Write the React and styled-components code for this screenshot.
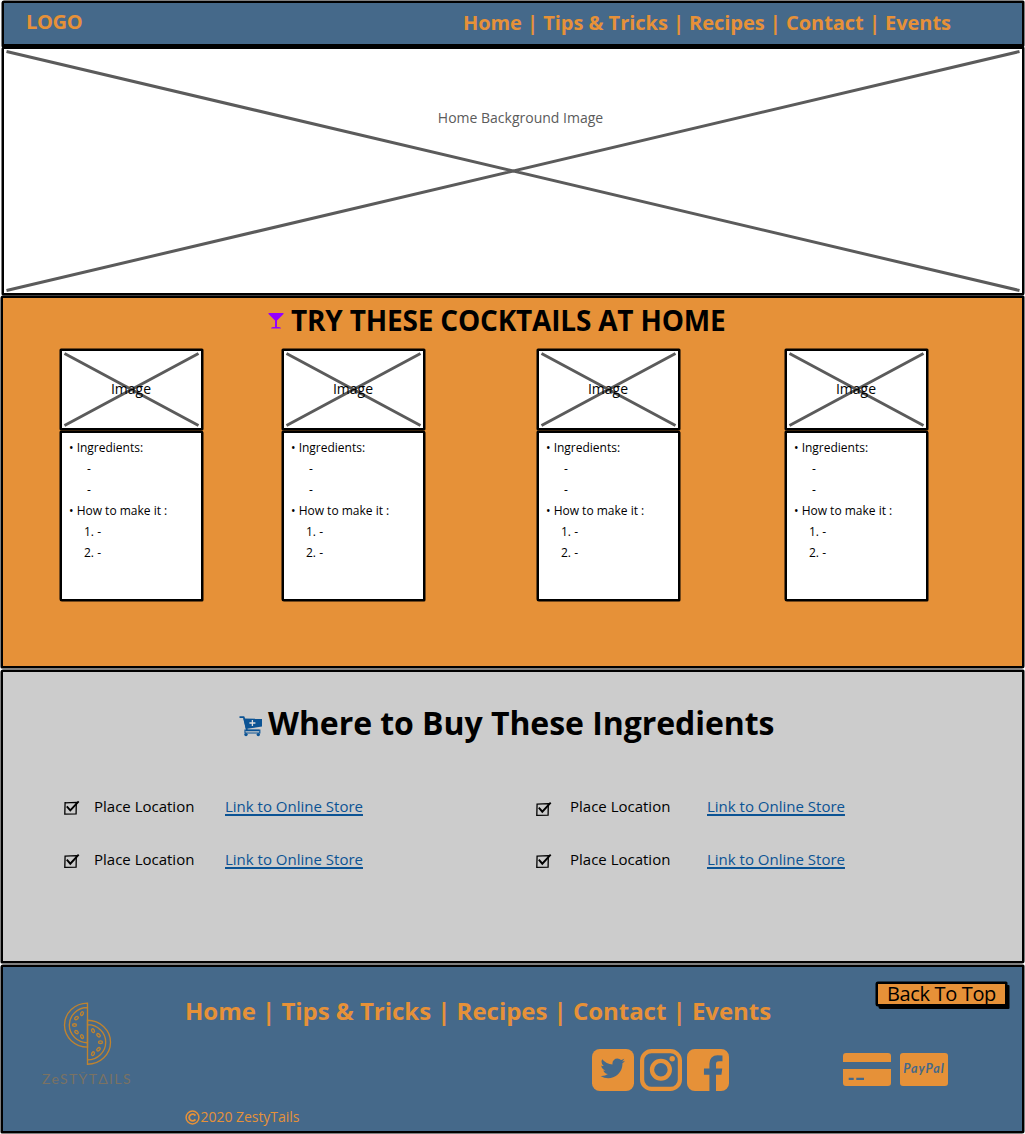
import React from "react";
import styled, { createGlobalStyle } from "styled-components";

const ORANGE = "#e69138";
const BLUE = "#45698a";
const LINK = "#0b5394";

const GlobalStyle = createGlobalStyle`
  * { box-sizing: border-box; }
  body { margin: 0; background: #fff; color: #000; font-family: "Open Sans", "Noto Sans", sans-serif; }
  h1, h2, p, ul, ol { margin: 0; padding: 0; }
  ul, ol { list-style: none; }
  svg { display: block; flex: none; }
`;

const Page = styled.div`
  width: 1025px;
  height: 1134px;
  padding: 1px 1px 0;
  display: flex;
  flex-direction: column;
  overflow: hidden;
`;

const Panel = styled.section`
  border: 2px solid #000;
  border-radius: 2px 1px 2px 1px;
  box-shadow: 0 0 0 0.5px #000;
  flex: none;
`;

const Header = styled(Panel).attrs({ as: "header" })`
  height: 46px;
  margin-left: 1px;
  border-bottom-width: 3px;
  background: ${BLUE};
  display: flex;
  justify-content: space-between;
  padding: 0 71px 0 22px;
`;

const Brand = styled.div`
  font-size: 20px;
  font-weight: 700;
  line-height: 37px;
  letter-spacing: -0.3px;
  color: ${ORANGE};
`;

const Nav = styled.nav`
  display: flex;
  white-space: pre;
  font-weight: 700;
  color: ${ORANGE};
  font-size: ${(p) => p.$size}px;
  line-height: ${(p) => p.$line}px;
  letter-spacing: -0.035px;
`;

const Hero = styled(Panel)`
  height: 248px;
  margin-left: 1px;
  background: #fff;
  display: grid;
  > * { grid-area: 1 / 1; }
`;

const HeroLabel = styled.p`
  justify-self: center;
  margin: 58px 0 0 15px;
  font-size: 14px;
  line-height: 22px;
  color: #5b5b5b;
`;

const Cocktails = styled(Panel)`
  height: 372px;
  margin-top: 1px;
  background: ${ORANGE};
`;

const Heading = styled.h1`
  display: flex;
  font-weight: 700;
  white-space: nowrap;
  font-size: ${(p) => p.$size}px;
  line-height: 40px;
  letter-spacing: ${(p) => p.$track}px;
  padding: ${(p) => p.$pad};
  gap: ${(p) => p.$gap}px;
`;

const IconSlot = styled.span`
  padding-top: ${(p) => p.$top}px;
`;

const CardGrid = styled.div`
  display: grid;
  grid-template-columns: 222px 255px 248px 144px;
  margin: 9px 0 0 57px;
`;

const Card = styled.article`
  width: 143px;
`;

const Thumb = styled.div`
  height: 81px;
  border: 2px solid #000;
  border-radius: 1px;
  box-shadow: 0 0 0 0.5px #000;
  background: #fff;
  display: grid;
  > * { grid-area: 1 / 1; }
`;

const ThumbLabel = styled.span`
  justify-self: center;
  margin: 28px 1px 0 0;
  font-size: 14px;
  line-height: 20px;
`;

const Recipe = styled.ul`
  height: 170px;
  margin-top: 1px;
  border: 2px solid #000;
  border-radius: 1px 2px 1px 2px;
  box-shadow: 0 0 0 0.5px #000;
  background: #fff;
  padding: 4px 0 0 7px;
  font-size: 12px;
  line-height: 21px;
`;

const Line = styled.li`
  white-space: pre;
  padding-left: ${(p) => p.$indent || 0}px;
`;

const Stores = styled(Panel)`
  height: 293px;
  margin-top: 2px;
  background: #ccc;
`;

const StoreGrid = styled.div`
  display: grid;
  grid-template-columns: 472px 400px;
  grid-auto-rows: 53px;
  margin: 51px 0 0 61px;
`;

const Store = styled.div`
  display: flex;
  font-size: 15px;
  line-height: 24px;
`;

const StoreName = styled.span`
  width: ${(p) => p.$width}px;
  margin-left: ${(p) => p.$left}px;
`;

const StoreLink = styled.a`
  color: ${LINK};
  text-decoration: underline;
  text-decoration-thickness: 1.5px;
  text-underline-offset: 2px;
`;

const Footer = styled(Panel).attrs({ as: "footer" })`
  height: 168px;
  margin-top: 2px;
  background: ${BLUE};
  display: grid;
  grid-template-columns: 182px 655px 1fr;
`;

const LogoBlock = styled.div`
  padding: 35px 0 0 39px;
  display: flex;
  flex-direction: column;
`;

const Wordmark = styled.span`
  margin-top: 4px;
  font-family: Lato, sans-serif;
  font-weight: 400;
  font-size: 14px;
  line-height: 18px;
  letter-spacing: 1.35px;
  color: #7a7263;
  white-space: nowrap;
`;

const FooterMain = styled.div`
  display: flex;
  flex-direction: column;
  padding-top: 26px;
`;

const Social = styled.div`
  display: flex;
  gap: 5.5px;
  margin: 20px 0 0 407px;
`;

const Copyright = styled.p`
  display: flex;
  align-items: center;
  gap: 0.5px;
  margin-top: 15px;
  font-size: 14px;
  line-height: 22px;
  letter-spacing: -0.04px;
  color: ${ORANGE};
`;

const FooterSide = styled.div`
  padding-top: 15px;
`;

const TopButton = styled.button`
  display: block;
  width: 131px;
  height: 24px;
  margin-left: 36px;
  padding: 0;
  border: 2px solid #000;
  border-radius: 2px 1px 1px 2px;
  background: ${ORANGE};
  box-shadow: 0 0 0 0.5px #000, 2.5px 3px #000;
  color: #000;
  font: 20px/20px "Open Sans", "Noto Sans", sans-serif;
  letter-spacing: -0.35px;
  white-space: nowrap;
`;

const Payments = styled.div`
  display: flex;
  gap: 9px;
  margin: 47px 0 0 3px;
`;

const PayPal = styled.span`
  width: 48px;
  height: 33px;
  border-radius: 3px;
  background: ${ORANGE};
  color: ${BLUE};
  font: italic 700 12.5px/31px Lato, sans-serif;
  letter-spacing: 1px;
  text-align: center;
`;

function Cross({ width, height }) {
  return (
    <svg width={width} height={height} stroke="#5b5b5b" strokeWidth="3">
      <path d={`M2.5 2.5L${width - 2.5} ${height - 2.5}M2.5 ${height - 2.5}L${width - 2.5} 2.5`} />
    </svg>
  );
}

function MartiniIcon() {
  return (
    <svg width="16" height="17" viewBox="0 0 16 17" fill="#9500ff">
      <path d="M.5 1H15.5V2L9 8.5V15H11Q13 15.2 13 16.5H3Q3 15.2 5 15H7V8.5L.5 2Z" />
    </svg>
  );
}

function CartIcon() {
  return (
    <svg width="24" height="21" viewBox="0 0 24 21">
      <path d="M.5 1.2H4.8L8 14.2M7 14.5H20" fill="none" stroke={LINK} strokeWidth="1.7" strokeLinejoin="round" />
      <path d="M4.5 2.5L23 2.8V10.5L8 12.8H6.8Z" fill={LINK} />
      <path d="M6 14.2H20.8V17H6Z" fill="none" stroke={LINK} strokeWidth="1.2" />
      <circle cx="7" cy="18.6" r="1.7" fill={LINK} />
      <circle cx="19.3" cy="18.6" r="1.7" fill={LINK} />
      <path d="M13.4 4V10M10.4 7H16.4" stroke="#ddd" strokeWidth="1.3" />
    </svg>
  );
}

function CheckIcon({ shift }) {
  return (
    <svg width="17" height="24" viewBox="0 0 17 24" fill="none" stroke="#000">
      <g transform={`translate(0 ${shift})`}>
        <path d="M1 6.1L12.3 5.7L12.1 17.1L.8 17.4L1.1 5.4" strokeWidth="1.3" />
        <path d="M2.8 9.6L6.3 13.7L14.7 4.6" strokeWidth="1.9" />
      </g>
    </svg>
  );
}

const SEEDS = [
  [-5.5, -11.5, 25],
  [-11, -7, 50],
  [-13, 0, 90],
  [-11, 7, 130],
  [-5.5, 11.5, 155],
];

function MelonHalf({ x, y, turn }) {
  return (
    <g transform={`translate(${x} ${y}) rotate(${turn})`}>
      <path d="M0 -22A23 22 0 0 0 0 22ZM0 -17.6A18.2 17.6 0 0 0 0 17.6" />
      {SEEDS.map(([sx, sy, a]) => (
        <ellipse key={sy} cx={sx} cy={sy} rx="1.3" ry="2" transform={`rotate(${a} ${sx} ${sy})`} />
      ))}
    </g>
  );
}

function MelonLogo() {
  return (
    <svg width="90" height="64" fill="none" stroke="#bf832f" strokeWidth="1.35">
      <MelonHalf x={45.5} y={23.1} turn={0} />
      <MelonHalf x={45.5} y={40.2} turn={180} />
    </svg>
  );
}

function TwitterIcon() {
  return (
    <svg width="42" height="42" viewBox="0 0 1536 1536">
      <rect width="1536" height="1536" rx="288" fill={ORANGE} />
      <path
        transform="translate(758 790) scale(.87) translate(-768 -768)"
        fill={BLUE}
        d="M1280 354q-56 25-121 34 68-40 93-117-65 38-134 51-61-66-153-66-87 0-148.500 61.500t-61.500 148.500q0 29 5 48-129-7-242-65t-192-155q-29 50-29 106 0 114 91 175-47-1-100-26v2q0 75 50 133.500t123 72.500q-29 8-51 8-13 0-39-4 21 63 74.500 104t121.500 42q-116 90-261 90-26 0-50-3 148 94 322 94 112 0 210-35.500t168-95 120.500-137 75-162 24.500-168.500q0-18-1-27 63-45 105-109z"
      />
    </svg>
  );
}

function InstagramIcon() {
  return (
    <svg width="42" height="42" fill="none" stroke={ORANGE}>
      <rect x="2.1" y="2.1" width="37.8" height="37.8" rx="9.5" strokeWidth="4.2" />
      <circle cx="20.9" cy="20.7" r="8.9" strokeWidth="4.3" />
      <circle cx="32.2" cy="9.8" r="2.7" fill={ORANGE} stroke="none" />
    </svg>
  );
}

function FacebookIcon() {
  return (
    <svg width="42" height="42" viewBox="0 128 1536 1536" fill={ORANGE}>
      <path d="M1248 128q119 0 203.5 84.5t84.5 203.5v960q0 119-84.5 203.5t-203.5 84.5h-188v-595h199l30-232h-229v-148q0-56 23.5-84t91.5-28l122-1v-207q-63-9-178-9-136 0-217.5 80t-81.5 226v171h-200v232h200v595h-532q-119 0-203.5-84.5t-84.5-203.5v-960q0-119 84.5-203.5t203.5-84.5h960z" />
    </svg>
  );
}

function CardIcon() {
  return (
    <svg width="48" height="33" fill={ORANGE}>
      <path d="M0 9V3Q0 0 3 0H45Q48 0 48 3V9ZM0 16H48V30Q48 33 45 33H3Q0 33 0 30Z" />
      <path d="M5.7 24.7H10.7V27H5.7ZM13.3 24.7H21V27H13.3Z" fill={BLUE} />
    </svg>
  );
}

function CopyrightIcon() {
  return (
    <svg width="15" height="15" fill="none" stroke={ORANGE} strokeWidth="1.5">
      <circle cx="7.5" cy="7.5" r="6.4" />
      <path d="M10.4 5.6A3.4 3.4 0 1 0 10.4 9.4" strokeWidth="1.9" />
    </svg>
  );
}

const RECIPE = [
  ["• Ingredients:", 0],
  ["-", 18],
  ["-", 18],
  ["• How to make it :", 0],
  ["1. -", 15],
  ["2. -", 15],
];

const STORES = [
  { left: 13, width: 131, shift: 2.7 },
  { left: 17, width: 137, shift: 4 },
  { left: 13, width: 131, shift: 3 },
  { left: 17, width: 137, shift: 3 },
];

const LINKS = "Home | Tips & Tricks | Recipes | Contact | Events";

export default function App() {
  return (
    <>
      <GlobalStyle />
      <Page>
        <Header>
          <Brand>LOGO</Brand>
          <Nav $size={20} $line={39}>{LINKS}</Nav>
        </Header>
        <Hero>
          <Cross width={1018} height={244} />
          <HeroLabel>Home Background Image</HeroLabel>
        </Hero>
        <Cocktails>
          <Heading $size={28} $track={-0.19} $pad="2px 0 0 265px" $gap={7}>
            <IconSlot $top={12}><MartiniIcon /></IconSlot>
            TRY THESE COCKTAILS AT HOME
          </Heading>
          <CardGrid>
            {[0, 1, 2, 3].map((n) => (
              <Card key={n}>
                <Thumb>
                  <Cross width={139} height={77} />
                  <ThumbLabel>Image</ThumbLabel>
                </Thumb>
                <Recipe>
                  {RECIPE.map(([text, indent], i) => (
                    <Line key={i} $indent={indent}>{text}</Line>
                  ))}
                </Recipe>
              </Card>
            ))}
          </CardGrid>
        </Cocktails>
        <Stores>
          <Heading $size={32} $track={-0.06} $pad="31px 0 0 236px" $gap={5}>
            <IconSlot $top={13}><CartIcon /></IconSlot>
            Where to Buy These Ingredients
          </Heading>
          <StoreGrid>
            {STORES.map((s, i) => (
              <Store key={i}>
                <CheckIcon shift={s.shift} />
                <StoreName $left={s.left} $width={s.width}>Place Location</StoreName>
                <StoreLink>Link to Online Store</StoreLink>
              </Store>
            ))}
          </StoreGrid>
        </Stores>
        <Footer>
          <LogoBlock>
            <MelonLogo />
            <Wordmark>ZeSTȲTΔILS</Wordmark>
          </LogoBlock>
          <FooterMain>
            <Nav $size={24} $line={36}>{LINKS}</Nav>
            <Social>
              <TwitterIcon />
              <InstagramIcon />
              <FacebookIcon />
            </Social>
            <Copyright>
              <CopyrightIcon />
              2020 ZestyTails
            </Copyright>
          </FooterMain>
          <FooterSide>
            <TopButton>Back To Top</TopButton>
            <Payments>
              <CardIcon />
              <PayPal>PayPal</PayPal>
            </Payments>
          </FooterSide>
        </Footer>
      </Page>
    </>
  );
}
